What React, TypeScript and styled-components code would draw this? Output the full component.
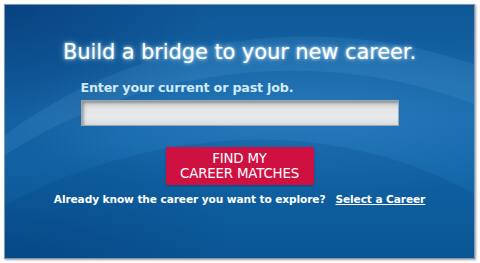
import React from "react";
import styled, { createGlobalStyle } from "styled-components";

const Global = createGlobalStyle`
  html, body {
    margin: 0;
    padding: 0;
    background: #ffffff;
  }
  body {
    font-family: "DejaVu Sans", Verdana, sans-serif;
  }
`;

//styled
const Page = styled.div`
  width: 480px;
  height: 263px;
  padding: 4px 5px 4px 4px;
  box-sizing: border-box;
`;

const Panel = styled.div`
  position: relative;
  height: 255px;
  box-sizing: border-box;
  overflow: hidden;
  border: 1px solid #7f97b0;
  box-shadow: 1px 1px 2px rgba(60, 60, 60, 0.5);
  background:
    radial-gradient(ellipse 420px 120px at 300px 110px, rgba(80, 160, 225, 0.3), rgba(80, 160, 225, 0) 70%),
    radial-gradient(ellipse 260px 200px at 0px 0px, rgba(0, 40, 100, 0.45), rgba(0, 40, 100, 0) 80%),
    radial-gradient(ellipse 300px 180px at 0px 260px, rgba(0, 40, 100, 0.35), rgba(0, 40, 100, 0) 80%),
    linear-gradient(180deg, #0f5898 0%, #1669ab 45%, #1266a8 75%, #0d5c9c 100%);
  display: flex;
  flex-direction: column;
  align-items: center;
`;

const Swoosh = styled.svg`
  position: absolute;
  inset: 0;
  pointer-events: none;
`;

const Content = styled.div`
  position: relative;
  display: flex;
  flex-direction: column;
  align-items: center;
  padding-top: 34px;
  width: 100%;
`;

const Title = styled.h1`
  margin: 0;
  font-size: 21px;
  line-height: 26px;
  font-weight: normal;
  letter-spacing: -0.1px;
  color: #ffffff;
  text-shadow: 0 0 3px rgba(210, 240, 255, 0.95), 0 0 7px rgba(160, 215, 250, 0.7);
`;

const Form = styled.div`
  display: flex;
  flex-direction: column;
  width: 318px;
  margin-top: 15px;
`;

const Label = styled.label`
  font-size: 12.7px;
  line-height: 16px;
  font-weight: bold;
  color: #cfeaf8;
  letter-spacing: -0.2px;
  margin-bottom: 4px;
`;

const JobInput = styled.input`
  height: 26px;
  box-sizing: border-box;
  border: 1px solid #9aa8b2;
  background: linear-gradient(180deg, #c9ccce 0%, #e3e5e6 35%, #e8e9ea 70%, #d9dbdc 100%);
  box-shadow: inset 2px 2px 3px rgba(0, 0, 0, 0.3);
  outline: none;
`;

const FindButton = styled.button`
  margin-top: 21px;
  width: 148px;
  height: 38px;
  padding: 0;
  border: none;
  background: #cf1141;
  color: #ffffff;
  font-family: "DejaVu Sans", Verdana, sans-serif;
  font-size: 13.4px;
  line-height: 15px;
  letter-spacing: -0.2px;
  box-shadow: 0 1px 2px rgba(0, 0, 0, 0.25);
  cursor: pointer;
`;

const Helper = styled.p`
  margin: 7px 0 0 0;
  font-size: 10.6px;
  line-height: 14px;
  font-weight: bold;
  color: #ffffff;
  letter-spacing: -0.1px;
`;

const CareerLink = styled.a`
  color: #ffffff;
  margin-left: 10px;
  text-decoration: underline;
`;

const App = () => {
  return (
    <>
      <Global />
      <Page>
        <Panel>
          <Swoosh width="471" height="255" viewBox="0 0 471 255">
            <path d="M0 130 C 120 40, 300 0, 471 60 L 471 100 C 320 40, 140 60, 0 150 Z" fill="rgba(120,190,240,0.12)" />
            <path d="M0 200 C 150 120, 330 110, 471 190 L 471 255 L 0 255 Z" fill="rgba(0,60,120,0.18)" />
          </Swoosh>
          <Content>
            <Title>Build a bridge to your new career.</Title>
            <Form>
              <Label htmlFor="job">Enter your current or past job.</Label>
              <JobInput id="job" type="text" />
            </Form>
            <FindButton type="button">
              FIND MY
              <br />
              CAREER MATCHES
            </FindButton>
            <Helper>
              Already know the career you want to explore?
              <CareerLink href="#">Select a Career</CareerLink>
            </Helper>
          </Content>
        </Panel>
      </Page>
    </>
  );
};

export default App;
